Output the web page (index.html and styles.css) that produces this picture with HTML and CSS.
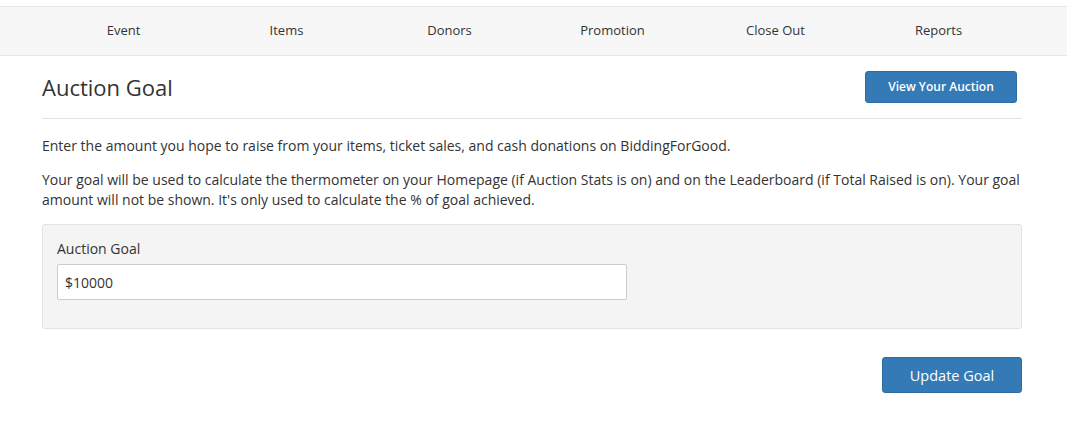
FILE: index.html
```html
<!DOCTYPE html>
<html lang="en">
<head>
<meta charset="utf-8">
<title>Auction Goal</title>
<link rel="stylesheet" href="styles.css">
</head>
<body>
<nav class="topnav">
  <ul class="topnav-list">
    <li><a href="#">Event</a></li>
    <li><a href="#">Items</a></li>
    <li><a href="#">Donors</a></li>
    <li><a href="#">Promotion</a></li>
    <li><a href="#">Close Out</a></li>
    <li><a href="#">Reports</a></li>
  </ul>
</nav>
<main class="container">
  <div class="page-header">
    <h1 class="page-title">Auction Goal</h1>
    <a href="#" class="btn btn-view">View Your Auction</a>
  </div>
  <p class="intro">Enter the amount you hope to raise from your items, ticket sales, and cash donations on BiddingForGood.</p>
  <p>Your goal will be used to calculate the thermometer on your Homepage (if Auction Stats is on) and on the Leaderboard (if Total Raised is on). Your goal amount will not be shown. It's only used to calculate the % of goal achieved.</p>
  <form class="goal-form">
    <div class="well">
      <label class="field-label" for="goal">Auction Goal</label>
      <input class="field-input" id="goal" type="text" value="$10000">
    </div>
    <div class="form-actions">
      <button type="button" class="btn btn-update">Update Goal</button>
    </div>
  </form>
</main>
</body>
</html>
```
FILE: styles.css
```css
* { box-sizing: border-box; }
html, body { margin: 0; padding: 0; background: #fff; }
body {
  font-family: "Open Sans", "Liberation Sans", sans-serif;
  font-size: 14px;
  line-height: 20px;
  color: #333;
}
.topnav {
  margin-top: 6px;
  background: #f7f7f7;
  border-top: 1px solid #e7e7e7;
  border-bottom: 1px solid #e7e7e7;
}
.topnav-list {
  list-style: none;
  margin: 0 0 0 42px;
  padding: 0;
  width: 978px;
  display: grid;
  grid-template-columns: repeat(6, 1fr);
}
.topnav-list li { text-align: center; }
.topnav-list a {
  display: block;
  height: 48px;
  line-height: 46px;
  font-size: 13px;
  color: #333;
  text-decoration: none;
}
.container {
  margin-left: 42px;
  width: 980px;
}
.page-header {
  display: flex;
  justify-content: space-between;
  align-items: center;
  padding: 15px 5px 15px 0;
  border-bottom: 1px solid #e2e2e2;
}
.page-title {
  margin: 0;
  font-size: 22px;
  font-weight: 400;
  line-height: 32px;
  color: #333;
}
.btn {
  display: inline-flex;
  align-items: center;
  justify-content: center;
  background: #337ab7;
  border: 1px solid #2e6da4;
  border-radius: 3px;
  color: #fff;
  text-decoration: none;
  font-family: "Open Sans", "Liberation Sans", sans-serif;
}
.btn-view {
  width: 152px;
  height: 32px;
  font-size: 12px;
  font-weight: 600;
}
p { margin: 0 0 14px; }
.intro { margin-top: 17px; }
.well {
  background: #f4f4f4;
  border: 1px solid #e3e3e3;
  border-radius: 3px;
  padding: 14px 14px 28px;
  display: flex;
  flex-direction: column;
  align-items: flex-start;
}
.field-label {
  display: block;
  margin-bottom: 5px;
}
.field-input {
  width: 570px;
  height: 36px;
  border: 1px solid #ccc;
  border-radius: 2px;
  background: #fff;
  padding: 0 7px;
  font-family: "Open Sans", "Liberation Sans", sans-serif;
  font-size: 14px;
  color: #333;
}
.form-actions {
  display: flex;
  justify-content: flex-end;
  padding-top: 28px;
}
.btn-update {
  width: 140px;
  height: 36px;
  font-size: 14.5px;
}
```
